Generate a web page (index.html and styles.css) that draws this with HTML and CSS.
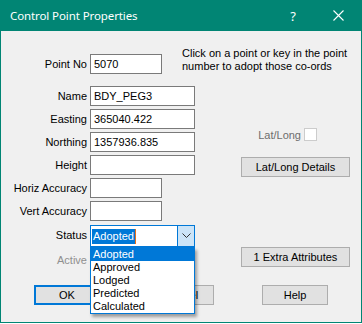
FILE: index.html
```html
<!DOCTYPE html>
<html lang="en">
<head>
  <meta charset="UTF-8">
  <meta name="viewport" content="width=device-width, initial-scale=1.0">
  <title>Control Point Properties</title>
  <link rel="stylesheet" href="styles.css">
</head>
<body>
  <div class="dialog">
    <div class="titlebar">
      <span class="title">Control Point Properties</span>
      <span class="help-icon">?</span>
      <span class="close-icon">
        <svg width="11" height="11" viewBox="0 0 11 11">
          <path d="M0.5 0.5 L10.5 10.5 M10.5 0.5 L0.5 10.5" stroke="#fff" stroke-width="1.1" fill="none"/>
        </svg>
      </span>
    </div>

    <div class="content">
      <div class="top-row">
        <span class="label">Point No</span>
        <div class="field short">5070</div>
        <p class="note">Click on a point or key in the point<br>number to adopt those co-ords</p>
      </div>

      <div class="main">
        <div class="form">
          <span class="label">Name</span>
          <div class="field">BDY_PEG3</div>
          <span class="label">Easting</span>
          <div class="field">365040.422</div>
          <span class="label">Northing</span>
          <div class="field">1357936.835</div>
          <span class="label">Height</span>
          <div class="field"></div>
          <span class="label">Horiz Accuracy</span>
          <div class="field short"></div>
          <span class="label">Vert Accuracy</span>
          <div class="field short"></div>
          <span class="label status-label">Status</span>
          <div class="combo">
            <span class="combo-text"><span class="selected">Adopted</span><span class="caret"></span></span>
            <span class="combo-btn">
              <svg width="9" height="6" viewBox="0 0 9 6">
                <path d="M0.5 0.5 L4.5 4.5 L8.5 0.5" stroke="#333" stroke-width="1" fill="none"/>
              </svg>
            </span>
            <ul class="dropdown">
              <li class="active">Adopted</li>
              <li>Approved</li>
              <li>Lodged</li>
              <li>Predicted</li>
              <li>Calculated</li>
            </ul>
          </div>
          <span class="label disabled">Active</span>
          <div class="check-cell"><span class="checkbox"></span></div>
        </div>

        <div class="side">
          <div class="latlong">
            <span class="muted">Lat/Long</span>
            <span class="checkbox"></span>
          </div>
          <button class="btn details">Lat/Long Details</button>
          <button class="btn extra">1 Extra Attributes</button>
        </div>
      </div>

      <div class="actions">
        <button class="btn default">OK</button>
        <button class="btn">Cancel</button>
        <button class="btn">Help</button>
      </div>
    </div>
  </div>
</body>
</html>
```

FILE: styles.css
```css
* {
  box-sizing: border-box;
}

body {
  margin: 0;
  background: #ffffff;
  font-family: "Liberation Sans", Arial, sans-serif;
  font-size: 11px;
  color: #000;
}

.dialog {
  width: 362px;
  height: 323px;
  background: #f0f0f0;
  border: 1px solid #018574;
  border-top: none;
}

.titlebar {
  height: 31px;
  margin: 0 -1px;
  background: #018574;
  color: #fff;
  display: flex;
  align-items: center;
  font-family: "Noto Sans", sans-serif;
  font-size: 11.5px;
}

.title {
  margin-left: 10px;
  flex: 1;
  letter-spacing: -0.1px;
}

.help-icon {
  font-size: 13px;
  margin-right: 37px;
}

.close-icon {
  display: flex;
  margin-right: 18px;
}

.content {
  padding-top: 16px;
}

.label {
  text-align: right;
  line-height: 20px;
  white-space: nowrap;
}

.field {
  height: 20px;
  width: 105px;
  background: #fff;
  border: 1px solid #7a7a7a;
  padding-left: 3px;
  line-height: 18px;
}

.field.short {
  width: 72px;
}

.top-row {
  display: flex;
  align-items: flex-start;
}

.top-row .label {
  width: 86px;
  margin-top: 7px;
  margin-right: 3px;
}

.top-row .field {
  margin-top: 7px;
}

.note {
  margin: 0 0 0 20px;
  line-height: 13px;
}

.main {
  display: flex;
  margin-top: 12px;
}

.form {
  display: grid;
  grid-template-columns: 86px 105px;
  grid-auto-rows: 20px;
  column-gap: 3px;
  row-gap: 3px;
}

.status-label {
  line-height: 22px;
}

.combo {
  position: relative;
  height: 22px;
  margin-top: 1px;
  background: #fff;
  border: 1px solid #0078d7;
  display: flex;
}

.combo-text {
  flex: 1;
  display: flex;
  align-items: center;
  padding-left: 1px;
}

.selected {
  background: #0078d7;
  color: #fff;
  line-height: 15px;
  padding: 0 1px;
}

.caret {
  width: 1px;
  height: 15px;
  background: #e8701a;
}

.combo-btn {
  width: 17px;
  background: #cce4f7;
  border-left: 1px solid #0078d7;
  display: flex;
  align-items: center;
  justify-content: center;
}

.dropdown {
  position: absolute;
  top: 21px;
  left: -1px;
  width: 105px;
  margin: 0;
  padding: 0;
  list-style: none;
  background: #fff;
  border: 1px solid #0078d7;
  box-shadow: 2px 3px 3px rgba(0, 0, 0, 0.35);
  z-index: 10;
}

.dropdown li {
  height: 13px;
  line-height: 13px;
  padding-left: 2px;
}

.dropdown li.active {
  background: #0078d7;
  color: #fff;
}

.disabled {
  color: #8f8f8f;
  margin-top: 3px;
}

.check-cell {
  margin-top: 3px;
  display: flex;
  align-items: center;
}

.checkbox {
  display: inline-block;
  width: 13px;
  height: 13px;
  background: #fff;
  border: 1px solid #cccccc;
}

.side {
  margin-left: 46px;
  width: 109px;
  display: flex;
  flex-direction: column;
}

.latlong {
  margin-top: 42px;
  height: 13px;
  display: flex;
  justify-content: flex-end;
  align-items: center;
  gap: 3px;
  padding-right: 33px;
}

.muted {
  color: #6d6d6d;
}

.btn {
  height: 20px;
  background: #e1e1e1;
  border: 1px solid #adadad;
  font-family: "Liberation Sans", Arial, sans-serif;
  font-size: 11px;
  color: #000;
  padding: 0;
}

.details {
  margin-top: 16px;
}

.extra {
  margin-top: 70px;
}

.actions {
  display: flex;
  gap: 48px;
  padding-left: 33px;
  margin-top: 18px;
}

.actions .btn {
  width: 66px;
}

.btn.default {
  border: 2px solid #0078d7;
}
```
